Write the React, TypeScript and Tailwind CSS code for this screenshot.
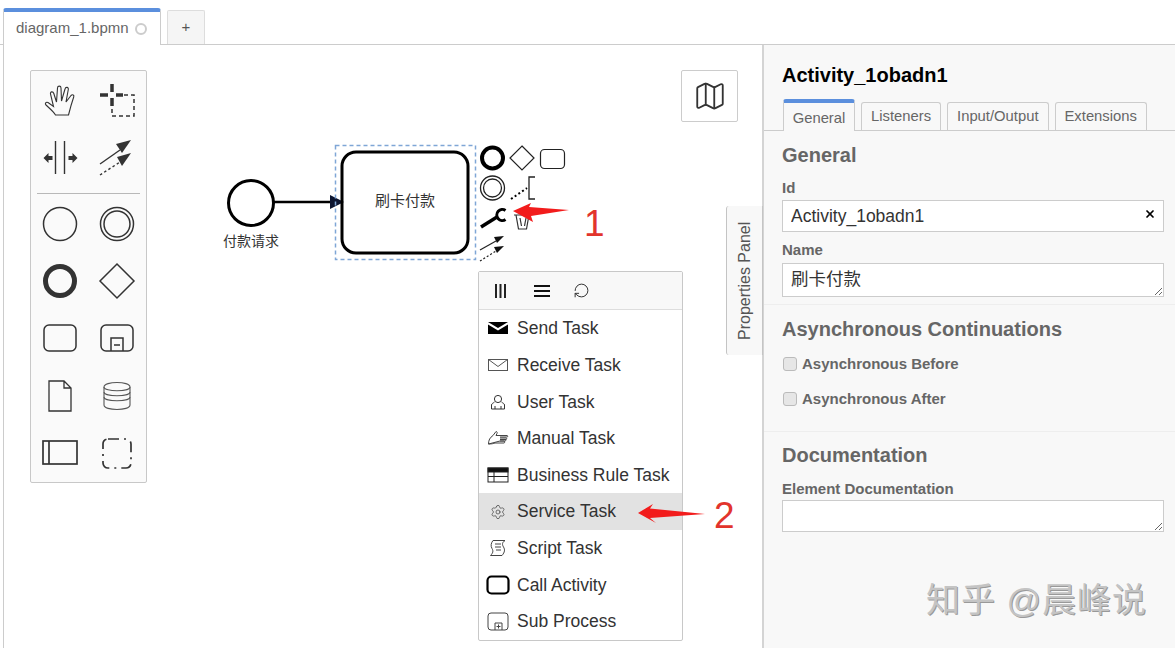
import { Map as MapIcon, RotateCcw, Settings, X } from "lucide-react"
import type { ReactNode } from "react"

const sans = "font-['Liberation_Sans','Noto_Sans_CJK_SC',sans-serif]"

function Ico({ children }: { children: ReactNode }) {
  return (
    <svg width="40" height="40" viewBox="0 0 40 40" fill="none" stroke="#333" strokeWidth="1.5">
      {children}
    </svg>
  )
}

// tool palette icons, all drawn around the centre (20,20)
const paletteTop: ReactNode[] = [
  <Ico key="hand">
    <path
      d="M15.5 35C13 31 9 28 6 25C4.500 23.500 6 21.500 8 22.500L13.500 26.500L10.500 14C10 11.500 13 11 13.800 13.500L16.500 22L17.500 8C17.600 5.500 21 5.500 21 8L21.500 21L25 9C25.600 6.500 28.800 7 28.300 9.500L26 22L31 15.500C32.500 14 34.500 15 33.700 17C32 22 30 29 28.500 35Z"
      strokeWidth="1.1"
    />
  </Ico>,
  <Ico key="lasso">
    <path d="M15 4v8M15 18v8M3 15h8M19 15h7" strokeWidth="3.5" />
    <path d="M27 15h10v21H15v-9" strokeWidth="1.500" strokeDasharray="4 3" />
  </Ico>,
  <Ico key="space">
    <path d="M15.500 4v33M24.500 4v33" strokeWidth="1.400" />
    <path d="M3.500 21l5-5v3h4v4h-4v3zM37.500 21l-5-5v3h-4v4h4v3z" fill="#333" stroke="none" />
  </Ico>,
  <Ico key="connect">
    <path d="M3 27l20-14" strokeWidth="1.400" />
    <path d="M34 3l-15 4 6 9z" fill="#333" stroke="none" />
    <path d="M3 38l20-13" strokeWidth="1.400" strokeDasharray="2.500 2.500" />
    <path d="M34 16l-14 4 5 9z" fill="#333" stroke="none" />
  </Ico>,
]

const paletteBottom: ReactNode[] = [
  <Ico key="start"><circle cx="20" cy="20" r="16.500" /></Ico>,
  <Ico key="intermediate">
    <circle cx="20" cy="20" r="16.500" />
    <circle cx="20" cy="20" r="13" />
  </Ico>,
  <Ico key="end"><circle cx="20" cy="20" r="14.500" strokeWidth="5" /></Ico>,
  <Ico key="gateway"><path d="M20 3l17 17-17 17-17-17z" /></Ico>,
  <Ico key="task"><rect x="4" y="7" width="32" height="26" rx="5" /></Ico>,
  <Ico key="subprocess">
    <rect x="4" y="7" width="32" height="26" rx="5" />
    <path d="M14 33V20h12v13M17 27h6" />
  </Ico>,
  <Ico key="data-object"><path d="M9 5h15l7 7v23H9zM24 5v7h7" strokeWidth="1.300" /></Ico>,
  <Ico key="data-store">
    <path d="M7 11c0-6 26-6 26 0v18c0 6-26 6-26 0z" stroke="#555" strokeWidth="1.100" />
    <path d="M7 11c0 5 26 5 26 0M7 16c0 5 26 5 26 0M7 21c0 5 26 5 26 0" stroke="#555" strokeWidth="1.100" />
  </Ico>,
  <Ico key="participant">
    <rect x="3" y="8" width="34" height="23" strokeWidth="1.700" />
    <path d="M9 8v23" strokeWidth="1.700" />
  </Ico>,
  <Ico key="group">
    <rect x="6" y="6" width="28" height="29" rx="5" strokeWidth="1.700" strokeDasharray="11 5 2 5" />
  </Ico>,
]

function Palette() {
  return (
    <div className="absolute left-[26px] top-[25px] w-[117px] rounded-[2px] border border-[#c8c8c8] bg-[#fafafa]">
      <div className="grid h-[115px] grid-cols-2">
        {paletteTop.map((icon, i) => (
          <div key={i} className="flex items-center justify-center">{icon}</div>
        ))}
      </div>
      <div className="mx-[6px] mt-[7px] border-t border-[#b8b8b8]" />
      <div className="grid grid-cols-2 auto-rows-[57.4px] pt-[1px]">
        {paletteBottom.map((icon, i) => (
          <div key={i} className="flex items-center justify-center">{icon}</div>
        ))}
      </div>
    </div>
  )
}

// the diagram is drawn with page coordinates (viewBox starts at the canvas corner)
function Diagram() {
  return (
    <svg className="absolute inset-0" width="759" height="603" viewBox="4 45 759 603" fill="none">
      <circle cx="251" cy="203" r="22.500" stroke="#000" strokeWidth="3" />
      <path d="M274 202h58" stroke="#000" strokeWidth="2.500" />
      <path d="M330 195l14 7-14 7z" fill="#0c1530" />
      <rect x="335.500" y="145.500" width="140" height="114" stroke="#7fa6d6" strokeWidth="1.500" strokeDasharray="4 3" />
      <rect x="342" y="152" width="126" height="101" rx="14" stroke="#000" strokeWidth="3" />

      {/* context pad */}
      <circle cx="492.500" cy="158" r="10.500" stroke="#000" strokeWidth="4" />
      <path d="M522 146l12 12-12 12-12-12z" stroke="#222" strokeWidth="1.200" />
      <rect x="540.500" y="149.500" width="24" height="19" rx="4" stroke="#222" strokeWidth="1.200" />
      <circle cx="492.500" cy="188" r="12" stroke="#222" strokeWidth="1.300" />
      <circle cx="492.500" cy="188" r="9" stroke="#222" strokeWidth="1.300" />
      <path d="M511 199l16-11" stroke="#000" strokeWidth="2" strokeDasharray="2 2.500" />
      <path d="M535 177h-6v22h6" stroke="#222" strokeWidth="1.300" />
      <path d="M481 227l16-10" stroke="#000" strokeWidth="3.500" />
      <path d="M505.500 210.500a5.500 5.500 0 1 0 0 9" stroke="#000" strokeWidth="3" />
      <path d="M514 215h17M516 215l2.500 14h8l2.500-14M520 218l1.500 8M526 218l-1.500 8" stroke="#333" strokeWidth="1.200" />
      <path d="M480 250l16-9" stroke="#222" strokeWidth="1.200" />
      <path d="M504 236l-10 1 3 6z" fill="#111" />
      <path d="M480 261l16-10" stroke="#222" strokeWidth="1.200" strokeDasharray="2 2" />
      <path d="M504 246l-10 1 3 6z" fill="#111" />
    </svg>
  )
}

const menuItems: { label: string; icon: ReactNode; active?: boolean }[] = [
  {
    label: "Send Task",
    icon: (
      <svg width="22" height="14" viewBox="0 0 22 14">
        <path d="M1 1h20l-10 6zM1 3.500l10 6 10-6V13H1z" fill="#000" />
      </svg>
    ),
  },
  {
    label: "Receive Task",
    icon: (
      <svg width="22" height="14" viewBox="0 0 22 14" fill="none" stroke="#555" strokeWidth="1">
        <rect x="1.500" y="1.500" width="19" height="11" />
        <path d="M1.500 1.500l9.500 7 9.500-7" />
      </svg>
    ),
  },
  {
    label: "User Task",
    icon: (
      <svg width="18" height="18" viewBox="0 0 18 18" fill="none" stroke="#333" strokeWidth="1">
        <circle cx="9" cy="6" r="3.600" />
        <path d="M5.500 9c-1 1-3 1.500-3 3v4h13v-4c0-1.500-2-2-3-3M6 16v-3M12 16v-3" />
      </svg>
    ),
  },
  {
    label: "Manual Task",
    icon: (
      <svg width="22" height="16" viewBox="0 0 22 16" fill="none" stroke="#444" strokeWidth="1">
        <path d="M1.500 14c0-4 1.500-6.500 4.500-8.500l3-4c1 0 1.500 1 1 2l-1 2h11c1 0 1 1.500 0 1.500h-7M13 8h6c1 0 1 1.500 0 1.500h-6M13 9.500h5c1 0 1 1.500 0 1.500h-5M13 11h4c1 0 1 2 0 2H8c-1.500.5-3 1-6.500 1z" />
      </svg>
    ),
  },
  {
    label: "Business Rule Task",
    icon: (
      <svg width="22" height="16" viewBox="0 0 22 16" fill="none" stroke="#222" strokeWidth="1">
        <rect x="1" y="1" width="20" height="14" />
        <rect x="1" y="1" width="20" height="4" fill="#111" />
        <path d="M1 9.500h20M7 5v10" />
      </svg>
    ),
  },
  {
    label: "Service Task",
    active: true,
    icon: <Settings size={16} strokeWidth={1.100} color="#444" />,
  },
  {
    label: "Script Task",
    icon: (
      <svg width="18" height="18" viewBox="0 0 18 18" fill="none" stroke="#444" strokeWidth="1">
        <path d="M4 1.500h12c-3 2-3 4-1.500 6.500s1.500 5-1.500 8.500H1.500C4 14 4.500 12 3 9.500S2 4 4 1.500zM6 5h6M6 8h6M7 11h5" />
      </svg>
    ),
  },
  {
    label: "Call Activity",
    icon: (
      <svg width="24" height="20" viewBox="0 0 24 20" fill="none" stroke="#000" strokeWidth="2.200">
        <rect x="1.500" y="1.500" width="21" height="17" rx="4" />
      </svg>
    ),
  },
  {
    label: "Sub Process",
    icon: (
      <svg width="22" height="19" viewBox="0 0 22 19" fill="none" stroke="#444" strokeWidth="1">
        <rect x="1" y="1" width="20" height="17" rx="3" />
        <path d="M8 18v-7h7v7M11.500 12.500v4M9.500 14.500h4" />
      </svg>
    ),
  },
]

function ReplaceMenu() {
  return (
    <div className={`absolute left-[474px] top-[226px] w-[205px] rounded-[2px] border border-[#c8c8c8] bg-white ${sans}`}>
      <div className="flex h-[38px] items-center border-b border-[#ddd] bg-[#f8f8f8]">
        <svg className="ml-[15px]" width="13" height="14" viewBox="0 0 13 14" stroke="#222" strokeWidth="2">
          <path d="M2 0v14M6.500 0v14M11 0v14" />
        </svg>
        <svg className="ml-[27px]" width="16" height="12" viewBox="0 0 16 12" stroke="#111" strokeWidth="2">
          <path d="M0 1h16M0 6h16M0 11h16" />
        </svg>
        <RotateCcw className="ml-[23px] -scale-x-100 rotate-180" size={17} strokeWidth={1.400} color="#333" />
      </div>
      {menuItems.map(item => (
        <div
          key={item.label}
          className={`flex h-[36.67px] items-center text-[17.5px] text-[#333] ${item.active ? "bg-[#e2e2e2]" : ""}`}
        >
          <span className="flex w-[38px] shrink-0 items-center justify-center">{item.icon}</span>
          {item.label}
        </div>
      ))}
    </div>
  )
}

function Annotations() {
  return (
    <>
      <svg className="pointer-events-none absolute inset-0" width="759" height="603" viewBox="4 45 759 603">
        <path d="M513 211l18-8-2 4 40 3-38 6 2 6z" fill="#f21c1c" />
        <path d="M638 513l15-9-3 4.500 55 5.500-55 4 6 5z" fill="#f21c1c" />
      </svg>
      <span className={`absolute left-[580px] top-[157px] text-[37px] leading-[44px] text-[#e2342c] ${sans}`}>1</span>
      <span className={`absolute left-[710px] top-[449px] text-[37px] leading-[44px] text-[#e2342c] ${sans}`}>2</span>
    </>
  )
}

function SectionTitle({ children }: { children: ReactNode }) {
  return <h3 className="text-[20px] font-bold leading-[24px] text-[#666]">{children}</h3>
}

function FieldLabel({ children }: { children: ReactNode }) {
  return <div className="text-[15px] font-bold leading-[18px] text-[#666]">{children}</div>
}

function PropertiesPanel() {
  const tabs = ["Listeners", "Input/Output", "Extensions"]
  return (
    <aside className={`w-[413px] shrink-0 border-l-2 border-[#d4d4d4] bg-[#f8f8f8] ${sans}`}>
      <div className="pl-[18px] pt-[18px] text-[20px] font-bold leading-[24px] text-black">Activity_1obadn1</div>

      <div className="mt-[13px] flex h-[31px] items-end gap-[6px] border-b border-[#ccc] pl-[19px] text-[14.8px] text-[#666]">
        <div className="-mb-px flex h-[32px] w-[72px] items-center justify-center rounded-t-[3px] border-x border-t-4 border-x-[#ccc] border-t-[#5b8fdd] bg-[#f8f8f8] pt-[2px]">
          General
        </div>
        {tabs.map(tab => (
          <div key={tab} className="flex h-[28px] items-center rounded-t-[3px] border-x border-t border-[#ccc] px-[9px]">
            {tab}
          </div>
        ))}
      </div>

      <div className="h-[174px] border-b border-[#eee] pl-[18px] pr-[11px] pt-[12px]">
        <SectionTitle>General</SectionTitle>
        <div className="mt-[12px]"><FieldLabel>Id</FieldLabel></div>
        <div className="relative mt-[3px]">
          <input
            readOnly
            value="Activity_1obadn1"
            className="h-[32px] w-full border border-[#ccc] bg-white px-[8px] text-[17.5px] text-[#333] outline-none"
          />
          <X className="absolute right-[8px] top-[8px]" size={12} strokeWidth={3.400} color="#000" />
        </div>
        <div className="mt-[9px]"><FieldLabel>Name</FieldLabel></div>
        <textarea
          readOnly
          value="刷卡付款"
          className="mt-[4px] block h-[34px] w-full resize border border-[#ccc] bg-white px-[8px] py-[3px] text-[17.5px] leading-[24px] text-[#333] outline-none"
        />
      </div>

      <div className="h-[127px] border-b border-[#eee] pl-[18px] pt-[12px]">
        <SectionTitle>Asynchronous Continuations</SectionTitle>
        {["Asynchronous Before", "Asynchronous After"].map((label, i) => (
          <label key={label} className={`flex items-center gap-[5px] ${i === 0 ? "mt-[14px]" : "mt-[17px]"}`}>
            <input
              type="checkbox"
              className="ml-px h-[14px] w-[14px] appearance-none rounded-[3px] border border-[#bbb] bg-[#e6e6e6]"
            />
            <span className="text-[15px] font-bold leading-[18px] text-[#666]">{label}</span>
          </label>
        ))}
      </div>

      <div className="pl-[18px] pr-[11px] pt-[11px]">
        <SectionTitle>Documentation</SectionTitle>
        <div className="mt-[13px]"><FieldLabel>Element Documentation</FieldLabel></div>
        <textarea readOnly className="mt-[2px] block h-[32px] w-full resize border border-[#ccc] bg-white outline-none" />
      </div>
    </aside>
  )
}

export default function App() {
  return (
    <div className={`relative flex h-[648px] w-[1175px] flex-col overflow-hidden bg-white ${sans}`}>
      <div className="flex h-[45px] shrink-0 items-end border-b border-[#ccc] pl-[3px]">
        <div className="-mb-px flex h-[37px] w-[158px] items-center gap-[6px] rounded-t-[3px] border-x border-t-4 border-x-[#ccc] border-t-[#5b8fdd] bg-white pl-[12px] text-[15px] text-[#666]">
          diagram_1.bpmn
          <span className="h-[12px] w-[12px] rounded-full border-2 border-[#ccc]" />
        </div>
        <div className="ml-[6px] flex h-[34px] w-[38px] items-center justify-center rounded-t-[2px] border-x border-t border-[#ddd] bg-[#f5f5f5] text-[15px] text-[#555]">
          +
        </div>
      </div>

      <div className="flex min-h-0 flex-1 pl-[3px]">
        <main className="relative flex-1 border-l border-[#ccc]">
          <Diagram />
          <span className="absolute left-[371px] top-[146px] w-[60px] text-center text-[15px] leading-[20px] text-[#333]">
            刷卡付款
          </span>
          <span className="absolute left-[219px] top-[188px] text-[14px] leading-[16px] text-[#333]">付款请求</span>
          <Palette />
          <div className="absolute left-[677px] top-[25px] flex h-[52px] w-[57px] items-center justify-center rounded-[2px] border border-[#ccc] bg-white">
            <MapIcon size={34} strokeWidth={1.300} color="#333" />
          </div>
          <ReplaceMenu />
          <Annotations />
          <div className="absolute right-[-1px] top-[161px] flex h-[149px] w-[37px] rotate-180 items-center justify-center rounded-tr-[3px] rounded-br-[3px] border-y border-r border-[#c4c4c4] bg-[#f8f8f8] text-[16px] text-[#555] [writing-mode:vertical-rl]">
            Properties Panel
          </div>
        </main>
        <PropertiesPanel />
      </div>

      <span className="pointer-events-none absolute left-[926px] top-[578px] text-[34px] leading-[44px] tracking-[1px] text-[#c4c4c4] [text-shadow:1px_1px_0_#999]">
        知乎 @晨峰说
      </span>
    </div>
  )
}
